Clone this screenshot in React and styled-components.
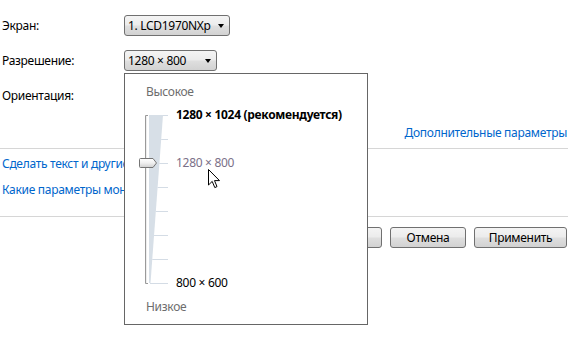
import styled, { createGlobalStyle } from 'styled-components'

const GlobalStyle = createGlobalStyle`
  html, body {
    margin: 0;
    padding: 0;
    background: #fff;
  }
  body {
    font-family: "Noto Sans", "Open Sans", sans-serif;
    font-size: 12px;
    letter-spacing: -0.3px;
    color: #000;
  }
`

const Page = styled.div`
  position: relative;
  width: 568px;
  height: 339px;
  overflow: hidden;
  background: #fff;
`

const Settings = styled.div`
  display: grid;
  grid-template-columns: 122px auto;
  row-gap: 14px;
  align-items: center;
  padding: 15px 0 0 2px;
`

const Label = styled.span`
  line-height: 21px;
`

const Combo = styled.div`
  justify-self: start;
  box-sizing: border-box;
  width: ${p => p.$w}px;
  height: 21px;
  display: flex;
  align-items: center;
  justify-content: space-between;
  padding: 0 5px 0 3px;
  border: 1px solid #707070;
  border-radius: 3px;
  background: linear-gradient(#f4f4f4, #ececec 45%, #dedede 55%, #d2d2d2);
`

const Arrow = styled.span`
  width: 0;
  height: 0;
  border-left: 3.5px solid transparent;
  border-right: 3.5px solid transparent;
  border-top: 4px solid #000;
`

const AdvancedRow = styled.div`
  display: flex;
  justify-content: flex-end;
  margin-top: 19px;
  padding-right: 1px;
  line-height: 16px;
`

const Link = styled.a`
  color: #0066cc;
  text-decoration: none;
  white-space: nowrap;
  line-height: 16px;
`

const Separator = styled.div`
  height: 1px;
  margin-top: ${p => p.$top || 0}px;
  background: #d6d6d6;
`

const Links = styled.div`
  display: flex;
  flex-direction: column;
  align-items: flex-start;
  gap: 10px;
  padding: 7px 0 18px 2px;
`

const Buttons = styled.div`
  display: flex;
  justify-content: flex-end;
  gap: 8px;
  margin-top: 10px;
  padding-right: 1px;
`

const Button = styled.div`
  box-sizing: border-box;
  width: ${p => p.$w}px;
  height: 21px;
  display: flex;
  align-items: center;
  justify-content: center;
  border: 1px solid #707070;
  border-radius: 3px;
  background: linear-gradient(#f4f4f4, #ececec 45%, #dedede 55%, #d2d2d2);
`

const Popup = styled.div`
  position: absolute;
  left: 124px;
  top: 73px;
  box-sizing: border-box;
  width: 244px;
  padding: 10px 0 9px 12px;
  border: 1px solid #666;
  background: #fff;
`

const Caption = styled.div`
  margin-left: 9px;
  line-height: 16px;
  color: #6d6d6d;
`

const Slider = styled.div`
  display: grid;
  grid-template-columns: 33px 1fr;
  column-gap: 6px;
  margin: 3px 0 4px;
`

const Values = styled.div`
  display: grid;
  grid-template-rows: repeat(8, 24px);
`

const Value = styled.span`
  grid-row: ${p => p.$row};
  line-height: 24px;
  white-space: nowrap;
  font-weight: ${p => (p.$bold ? 700 : 400)};
  color: ${p => p.$color || '#000'};
`

const Cursor = styled.svg`
  position: absolute;
  left: 208px;
  top: 169px;
`

const ticks = [0, 1, 2, 3, 4, 5, 6, 7]

function SliderTrack() {
  const wedgeRight = y => 26 - ((y - 12) / 168) * 12.5
  return (
    <svg width="33" height="192" viewBox="0 0 33 192">
      <defs>
        <linearGradient id="thumb" x1="0" y1="0" x2="0" y2="1">
          <stop offset="0" stopColor="#ffffff" />
          <stop offset="0.5" stopColor="#f0f0f0" />
          <stop offset="1" stopColor="#cfcfcf" />
        </linearGradient>
      </defs>
      <polygon points="12,12 26,12 13.5,180 12,180" fill="#d7dfe7" />
      {ticks.map(i => {
        const y = 12 + i * 24 + 0.5
        return (
          <line key={i} x1={i === 7 ? 13 : wedgeRight(y)} y1={y} x2="31" y2={y} stroke="#d4dce5" strokeWidth="1" />
        )
      })}
      <path d="M11 12.5 H8.5 V180.5 H11" fill="none" stroke="#9a9a9a" strokeWidth="1" />
      <line x1="9.5" y1="13" x2="9.5" y2="180" stroke="#eeeeee" strokeWidth="1" />
      <path
        d="M3.5 55.5 H16 L19.5 60 L16 64.5 H3.5 Q2.5 64.5 2.5 63.5 V56.5 Q2.5 55.5 3.5 55.5 Z"
        fill="url(#thumb)"
        stroke="#757575"
        strokeWidth="1"
      />
    </svg>
  )
}

export default function App() {
  return (
    <Page>
      <GlobalStyle />
      <Settings>
        <Label>Экран:</Label>
        <Combo $w={106}>
          <span>1. LCD1970NXp</span>
          <Arrow />
        </Combo>
        <Label>Разрешение:</Label>
        <Combo $w={93}>
          <span>1280 × 800</span>
          <Arrow />
        </Combo>
        <Label>Ориентация:</Label>
        <Combo $w={106}>
          <span>Альбомная</span>
          <Arrow />
        </Combo>
      </Settings>
      <AdvancedRow>
        <Link href="#">Дополнительные параметры</Link>
      </AdvancedRow>
      <Separator $top={7} />
      <Links>
        <Link href="#">Сделать текст и другие элементы больше или меньше</Link>
        <Link href="#">Какие параметры монитора следует выбрать?</Link>
      </Links>
      <Separator />
      <Buttons>
        <Button $w={75}>ОК</Button>
        <Button $w={76}>Отмена</Button>
        <Button $w={93}>Применить</Button>
      </Buttons>

      <Popup>
        <Caption>Высокое</Caption>
        <Slider>
          <SliderTrack />
          <Values>
            <Value $row={1} $bold>1280 × 1024 (рекомендуется)</Value>
            <Value $row={3} $color="#7b7088">1280 × 800</Value>
            <Value $row={8}>800 × 600</Value>
          </Values>
        </Slider>
        <Caption>Низкое</Caption>
      </Popup>

      <Cursor width="13" height="20" viewBox="0 0 13 20">
        <path d="M0.5 0.5 V16 L4.2 12.4 L6.8 18.6 L9 17.6 L6.5 11.6 H11.5 Z" fill="#fff" stroke="#000" strokeWidth="1" strokeLinejoin="miter" />
      </Cursor>
    </Page>
  )
}
